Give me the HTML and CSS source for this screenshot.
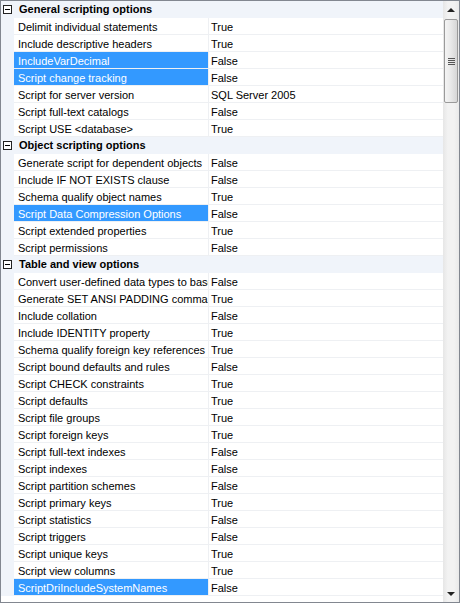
FILE: index.html
```html
<!DOCTYPE html>
<html lang="en">
<head>
    <meta charset="UTF-8">
    <title>Scripting Options</title>
    <link rel="stylesheet" href="styles.css">
</head>
<body>
    <div class="grid">
        <div class="rows">
            <div class="cat"><span class="toggle"></span>General scripting options</div>
            <div class="prop"><div class="name">Delimit individual statements</div><div class="value">True</div></div>
            <div class="prop"><div class="name">Include descriptive headers</div><div class="value">True</div></div>
            <div class="prop"><div class="name selected">IncludeVarDecimal</div><div class="value">False</div></div>
            <div class="prop"><div class="name selected">Script change tracking</div><div class="value">False</div></div>
            <div class="prop"><div class="name">Script for server version</div><div class="value">SQL Server 2005</div></div>
            <div class="prop"><div class="name">Script full-text catalogs</div><div class="value">False</div></div>
            <div class="prop"><div class="name">Script USE &lt;database&gt;</div><div class="value">True</div></div>

            <div class="cat"><span class="toggle"></span>Object scripting options</div>
            <div class="prop"><div class="name">Generate script for dependent objects</div><div class="value">False</div></div>
            <div class="prop"><div class="name">Include IF NOT EXISTS clause</div><div class="value">False</div></div>
            <div class="prop"><div class="name">Schema qualify object names</div><div class="value">True</div></div>
            <div class="prop"><div class="name selected">Script Data Compression Options</div><div class="value">False</div></div>
            <div class="prop"><div class="name">Script extended properties</div><div class="value">True</div></div>
            <div class="prop"><div class="name">Script permissions</div><div class="value">False</div></div>

            <div class="cat"><span class="toggle"></span>Table and view options</div>
            <div class="prop"><div class="name">Convert user-defined data types to base types</div><div class="value">False</div></div>
            <div class="prop"><div class="name">Generate SET ANSI PADDING commands</div><div class="value">True</div></div>
            <div class="prop"><div class="name">Include collation</div><div class="value">False</div></div>
            <div class="prop"><div class="name">Include IDENTITY property</div><div class="value">True</div></div>
            <div class="prop"><div class="name">Schema qualify foreign key references</div><div class="value">True</div></div>
            <div class="prop"><div class="name">Script bound defaults and rules</div><div class="value">False</div></div>
            <div class="prop"><div class="name">Script CHECK constraints</div><div class="value">True</div></div>
            <div class="prop"><div class="name">Script defaults</div><div class="value">True</div></div>
            <div class="prop"><div class="name">Script file groups</div><div class="value">True</div></div>
            <div class="prop"><div class="name">Script foreign keys</div><div class="value">True</div></div>
            <div class="prop"><div class="name">Script full-text indexes</div><div class="value">False</div></div>
            <div class="prop"><div class="name">Script indexes</div><div class="value">False</div></div>
            <div class="prop"><div class="name">Script partition schemes</div><div class="value">False</div></div>
            <div class="prop"><div class="name">Script primary keys</div><div class="value">True</div></div>
            <div class="prop"><div class="name">Script statistics</div><div class="value">False</div></div>
            <div class="prop"><div class="name">Script triggers</div><div class="value">False</div></div>
            <div class="prop"><div class="name">Script unique keys</div><div class="value">True</div></div>
            <div class="prop"><div class="name">Script view columns</div><div class="value">True</div></div>
            <div class="prop"><div class="name selected">ScriptDriIncludeSystemNames</div><div class="value">False</div></div>
        </div>

        <div class="scrollbar">
            <div class="arrow"><span class="tri-up"></span></div>
            <div class="track">
                <div class="thumb"><span class="grip"></span></div>
            </div>
            <div class="arrow"><span class="tri-down"></span></div>
        </div>
    </div>
</body>
</html>
```

FILE: styles.css
```css
body {
    margin: 0;
    font-family: 'Liberation Sans', Arial, sans-serif;
    font-size: 11px;
    color: #000;
    background: #fff;
}

.grid {
    width: 460px;
    height: 603px;
    box-sizing: border-box;
    border: 1px solid #828790;
    display: flex;
    background: #fff;
    overflow: hidden;
}

.rows {
    flex: 1;
    background: #fff;
    overflow: hidden;
}

/* category header */
.cat {
    height: 17px;
    display: flex;
    align-items: center;
    background: #f0f4fa;
    font-weight: bold;
    line-height: 17px;
    white-space: nowrap;
}

.toggle {
    width: 7px;
    height: 7px;
    border: 1px solid #222;
    margin: 0 7px 0 2px;
    position: relative;
    background: #fff;
    flex: none;
}

.toggle::after {
    content: '';
    position: absolute;
    left: 1px;
    right: 1px;
    top: 3px;
    height: 1px;
    background: #000;
}

/* property rows */
.prop {
    height: 17px;
    display: flex;
    border-left: 13px solid #f0f4fa;
    line-height: 18px;
    white-space: nowrap;
}

.name {
    width: 190px;
    padding-left: 4px;
    border-right: 1px solid #eef0f3;
    border-bottom: 1px solid #eef0f3;
    overflow: hidden;
    flex: none;
}

.name.selected {
    background: #3399ff;
    color: #fff;
}

.value {
    flex: 1;
    padding-left: 2px;
    border-bottom: 1px solid #eef0f3;
    overflow: hidden;
}

/* scrollbar */
.scrollbar {
    width: 16px;
    display: flex;
    flex-direction: column;
    background: linear-gradient(90deg, #e6e6e6, #f2f2f2 30%, #f2f2f2 70%, #e9e9e9);
}

.arrow {
    height: 17px;
    display: flex;
    align-items: center;
    justify-content: center;
    flex: none;
}

.tri-up {
    width: 0;
    height: 0;
    border-left: 4px solid transparent;
    border-right: 4px solid transparent;
    border-bottom: 4px solid #222;
}

.tri-down {
    width: 0;
    height: 0;
    border-left: 4px solid transparent;
    border-right: 4px solid transparent;
    border-top: 4px solid #222;
}

.track {
    flex: 1;
    padding: 1px 1px 0;
}

.thumb {
    height: 84px;
    box-sizing: border-box;
    border: 1px solid #9a9a9a;
    border-radius: 2px;
    background: linear-gradient(90deg, #f4f4f4, #e8e8e8 50%, #d6d6d6);
    display: flex;
    align-items: center;
    justify-content: center;
}

.grip {
    width: 7px;
    height: 7px;
    background: repeating-linear-gradient(180deg, #555 0, #555 1px, transparent 1px, transparent 2px);
}
```
